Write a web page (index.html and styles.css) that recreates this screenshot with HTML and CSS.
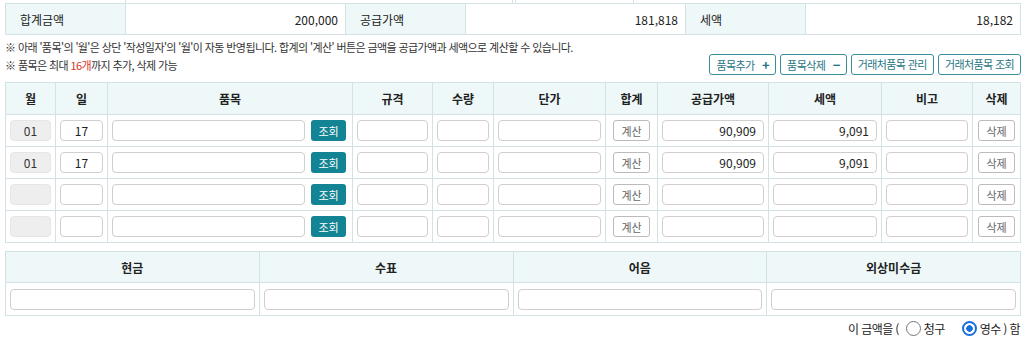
FILE: index.html
```html
<!DOCTYPE html>
<html lang="ko">
<head>
    <meta charset="UTF-8">
    <meta name="viewport" content="width=device-width, initial-scale=1.0">
    <title>거래명세서 품목</title>
    <link rel="stylesheet" href="styles.css">
</head>
<body>
    <div class="page">
        <!-- Previous row (scrolled off) -->
        <div class="prev-row">
            <span class="pc pc1"></span>
            <span class="pc pc2"></span>
            <span class="pc pc3"></span>
            <span class="pc pc4"></span>
            <span class="pc pc5"></span>
        </div>

        <!-- Totals -->
        <table class="sum-table">
            <colgroup>
                <col style="width:120px"><col style="width:220px">
                <col style="width:120px"><col style="width:220px">
                <col style="width:120px"><col>
            </colgroup>
            <tr>
                <th>합계금액</th><td>200,000</td>
                <th>공급가액</th><td>181,818</td>
                <th>세액</th><td>18,182</td>
            </tr>
        </table>

        <!-- Notes and actions -->
        <div class="note-bar">
            <div class="notes">
                <p class="note">※ 아래 '품목'의 '월'은 상단 '작성일자'의 '월'이 자동 반영됩니다. 합계의 '계산' 버튼은 금액을 공급가액과 세액으로 계산할 수 있습니다.</p>
                <p class="note">※ 품목은 최대 <em>16개</em>까지 추가, 삭제 가능</p>
            </div>
            <div class="actions">
                <button class="btn-line">품목추가 <b>+</b></button>
                <button class="btn-line">품목삭제 <b>−</b></button>
                <button class="btn-line">거래처품목 관리</button>
                <button class="btn-line">거래처품목 조회</button>
            </div>
        </div>

        <!-- Items -->
        <table class="item-table">
            <colgroup>
                <col style="width:50px"><col style="width:52px"><col style="width:245px">
                <col style="width:80px"><col style="width:61px"><col style="width:112px">
                <col style="width:52px"><col style="width:111px"><col style="width:113px">
                <col style="width:91px"><col>
            </colgroup>
            <tr>
                <th>월</th><th>일</th><th>품목</th><th>규격</th><th>수량</th><th>단가</th>
                <th>합계</th><th>공급가액</th><th>세액</th><th>비고</th><th>삭제</th>
            </tr>
            <tr>
                <td><div class="month">01</div></td>
                <td><input class="inp center" value="17"></td>
                <td><div class="item-cell"><input class="inp"><button class="btn-teal">조회</button></div></td>
                <td><input class="inp"></td>
                <td><input class="inp"></td>
                <td><input class="inp"></td>
                <td><button class="btn-gray">계산</button></td>
                <td><input class="inp right" value="90,909"></td>
                <td><input class="inp right" value="9,091"></td>
                <td><input class="inp"></td>
                <td><button class="btn-gray">삭제</button></td>
            </tr>
            <tr>
                <td><div class="month">01</div></td>
                <td><input class="inp center" value="17"></td>
                <td><div class="item-cell"><input class="inp"><button class="btn-teal">조회</button></div></td>
                <td><input class="inp"></td>
                <td><input class="inp"></td>
                <td><input class="inp"></td>
                <td><button class="btn-gray">계산</button></td>
                <td><input class="inp right" value="90,909"></td>
                <td><input class="inp right" value="9,091"></td>
                <td><input class="inp"></td>
                <td><button class="btn-gray">삭제</button></td>
            </tr>
            <tr>
                <td><div class="month"></div></td>
                <td><input class="inp center"></td>
                <td><div class="item-cell"><input class="inp"><button class="btn-teal">조회</button></div></td>
                <td><input class="inp"></td>
                <td><input class="inp"></td>
                <td><input class="inp"></td>
                <td><button class="btn-gray">계산</button></td>
                <td><input class="inp right"></td>
                <td><input class="inp right"></td>
                <td><input class="inp"></td>
                <td><button class="btn-gray">삭제</button></td>
            </tr>
            <tr>
                <td><div class="month"></div></td>
                <td><input class="inp center"></td>
                <td><div class="item-cell"><input class="inp"><button class="btn-teal">조회</button></div></td>
                <td><input class="inp"></td>
                <td><input class="inp"></td>
                <td><input class="inp"></td>
                <td><button class="btn-gray">계산</button></td>
                <td><input class="inp right"></td>
                <td><input class="inp right"></td>
                <td><input class="inp"></td>
                <td><button class="btn-gray">삭제</button></td>
            </tr>
        </table>

        <!-- Payment -->
        <table class="pay-table">
            <tr>
                <th>현금</th><th>수표</th><th>어음</th><th>외상미수금</th>
            </tr>
            <tr>
                <td><input class="inp"></td>
                <td><input class="inp"></td>
                <td><input class="inp"></td>
                <td><input class="inp"></td>
            </tr>
        </table>

        <div class="receipt">
            <span>이 금액을 (</span>
            <label class="radio"><span class="dot"></span>청구</label>
            <label class="radio on"><span class="dot"></span>영수 ) 함</label>
        </div>
    </div>
</body>
</html>
```

FILE: styles.css
```css
/* Base */
body {
    margin: 0;
    font-family: "Noto Sans CJK KR", "Noto Sans", sans-serif;
    font-size: 12px;
    color: #222;
    background: #fff;
    overflow: hidden;
}

.page {
    padding: 0 4px 0 5px;
}

table {
    border-collapse: collapse;
    table-layout: fixed;
    width: 100%;
}

th, td {
    border: 1px solid #d3e3e5;
    padding: 0;
}

th {
    background-color: #eef8f8;
    font-weight: bold;
    color: #222;
}

/* Sliver of the row above */
.prev-row {
    display: flex;
    height: 3px;
}

.pc {
    border-left: 1px solid #d3e3e5;
    box-sizing: border-box;
}

.pc1 { width: 120px; border-left: none; }
.pc2 { width: 387px; }
.pc3 { width: 3px; }
.pc4 { width: 118px; }
.pc5 { flex: 1; }

/* Totals table */
.sum-table th,
.sum-table td {
    height: 30px;
    font-size: 12px;
}

.sum-table th {
    text-align: left;
    padding-left: 14px;
    font-weight: normal;
}

.sum-table td {
    text-align: right;
    padding-right: 7px;
}

/* Notes */
.note-bar {
    display: flex;
    justify-content: space-between;
    align-items: flex-end;
    margin: 3px 0 8px;
}

.note {
    margin: 0;
    font-size: 11px;
    color: #333;
    line-height: 18px;
    letter-spacing: -0.6px;
    white-space: nowrap;
}

.note em {
    font-style: normal;
    color: #d9342b;
}

.actions {
    display: flex;
    gap: 4px;
    margin-bottom: -1px;
}

.btn-line {
    height: 21px;
    padding: 0 6px;
    border: 1px solid #3a8e99;
    border-radius: 3px;
    background: #fff;
    color: #1f7583;
    font-family: inherit;
    font-size: 11px;
    line-height: 19px;
    letter-spacing: -0.6px;
}

.btn-line b {
    margin-left: 5px;
    font-size: 13px;
}

/* Item table */
.item-table th {
    height: 31px;
    font-size: 12px;
}

.item-table td {
    height: 31px;
    padding: 0 4px;
    text-align: center;
}

.inp {
    display: block;
    box-sizing: border-box;
    width: 100%;
    height: 21px;
    border: 1px solid #cfcfcf;
    border-radius: 4px;
    padding: 0 7px;
    font-family: inherit;
    font-size: 12px;
    color: #222;
    background: #fff;
}

.inp.center { text-align: center; }
.inp.right { text-align: right; }

.month {
    height: 21px;
    border-radius: 4px;
    background: #eeeeef;
    border: 1px solid #e6e6e6;
    box-sizing: border-box;
    line-height: 19px;
    color: #333;
    font-size: 12px;
}

.item-cell {
    display: flex;
    align-items: center;
    gap: 6px;
    padding-right: 2px;
}

.btn-teal {
    flex: none;
    width: 35px;
    height: 21px;
    border: none;
    border-radius: 3px;
    background: #128494;
    color: #fff;
    font-family: inherit;
    font-size: 11px;
    padding: 0;
}

.btn-gray {
    width: 37px;
    height: 21px;
    border: 1px solid #bbb;
    border-radius: 3px;
    background: #fff;
    color: #666;
    font-family: inherit;
    font-size: 11px;
    padding: 0;
    margin: 0 auto;
    display: block;
}

/* Payment table */
.pay-table {
    margin-top: 8px;
}

.pay-table th {
    height: 30px;
}

.pay-table td {
    height: 32px;
    padding: 0 4px;
}

/* Receipt line */
.receipt {
    display: flex;
    justify-content: flex-end;
    align-items: center;
    gap: 4px;
    height: 24px;
    font-size: 12px;
    color: #222;
    letter-spacing: -0.6px;
    padding-right: 1px;
}

.radio {
    display: flex;
    align-items: center;
    gap: 3px;
    margin-right: 10px;
}

.radio.on {
    margin-right: 0;
}

.dot {
    width: 15px;
    height: 15px;
    margin-left: 3px;
    border: 1px solid #777;
    border-radius: 50%;
    box-sizing: border-box;
    display: inline-block;
}

.radio.on .dot {
    border: 2px solid #1a6fe0;
    background: radial-gradient(circle, #1a6fe0 0 3px, #fff 3.5px);
}
```
